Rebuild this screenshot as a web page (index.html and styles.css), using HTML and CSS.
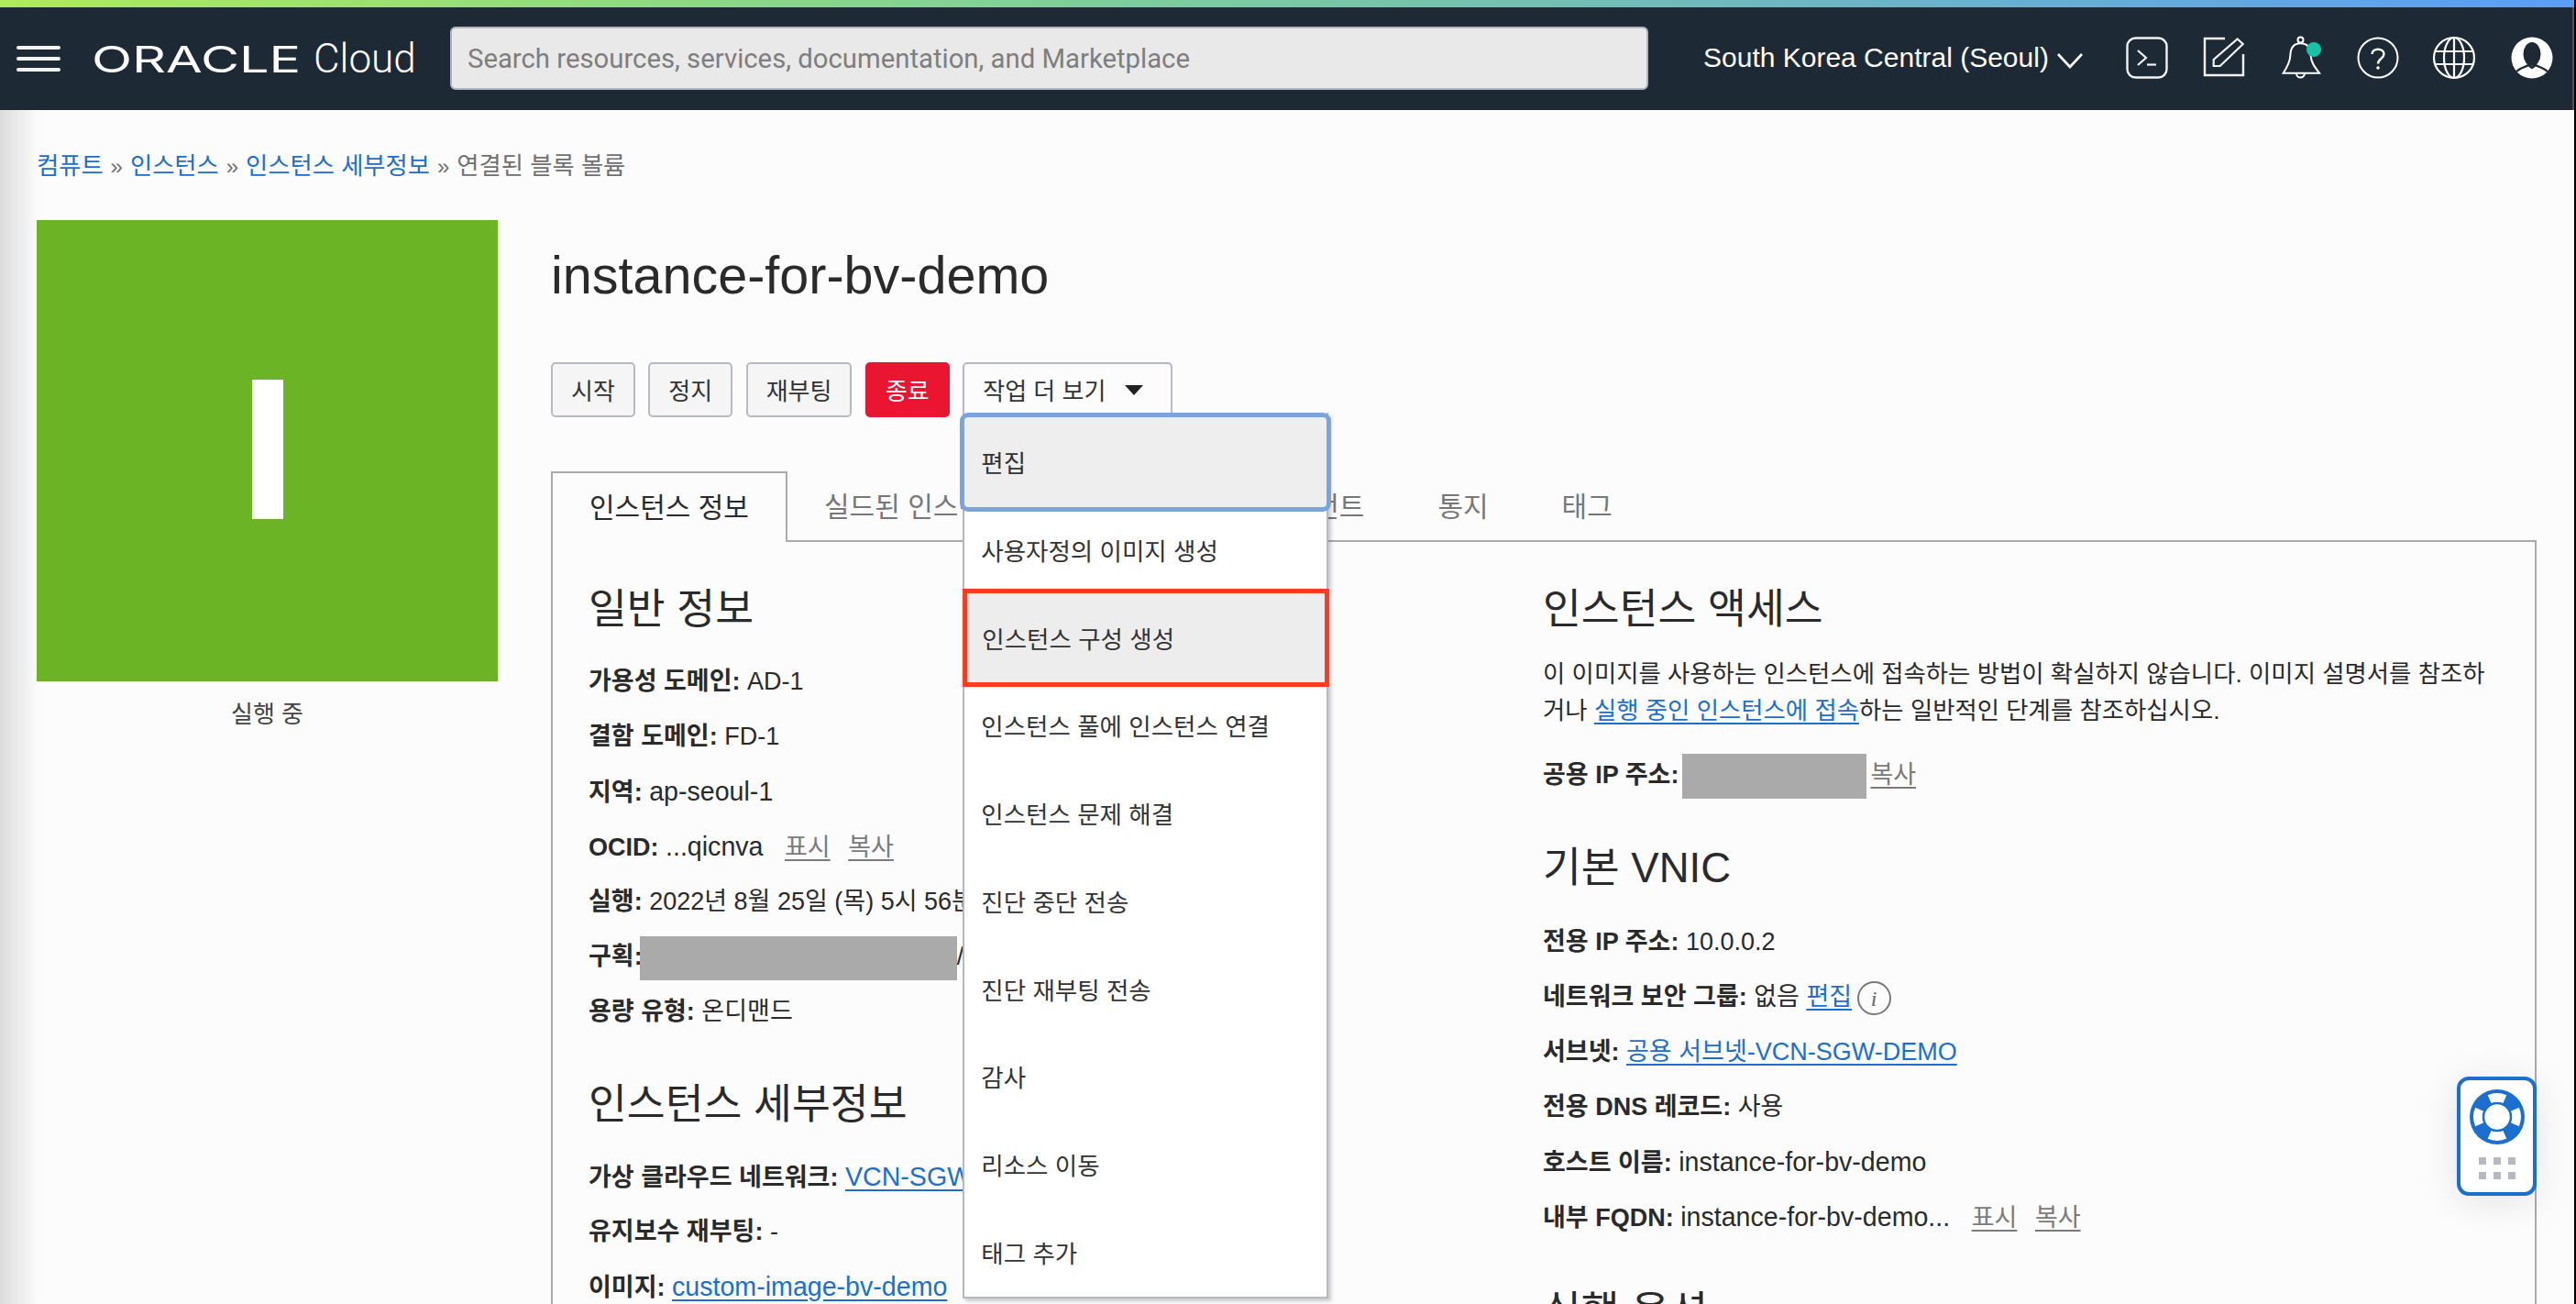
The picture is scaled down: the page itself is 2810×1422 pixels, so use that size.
FILE: index.html
```html
<!DOCTYPE html>
<html lang="ko">
<head>
  <meta charset="UTF-8" />
  <title>instance-for-bv-demo</title>
  <link rel="stylesheet" href="styles.css">
</head>
<body>
  <div class="stripe"></div>
  <header class="topnav">
    <div class="hamburger"><span></span><span></span><span></span></div>
    <div class="logo"><span class="logo-oracle">ORACLE</span><span class="logo-cloud">Cloud</span></div>
    <div class="search">Search resources, services, documentation, and Marketplace</div>
    <div class="region">South Korea Central (Seoul)
      <svg class="chev" width="28" height="17" viewBox="0 0 28 17"><path d="M1 1l13 14L27 1" fill="none" stroke="#fff" stroke-width="2.6"/></svg>
    </div>
    <div class="nav-icons">
      <svg width="46" height="47" viewBox="0 0 46 47" fill="none" stroke="#f2f2f2" stroke-width="2.4"><rect x="1.5" y="1.5" width="43" height="43" rx="9"/><path d="M13 15l9 8-9 8" stroke-width="2.2"/><path d="M23 30.5h10" stroke-width="2.2"/></svg>
      <svg width="48" height="46" viewBox="0 0 48 46" fill="none" stroke="#f2f2f2" stroke-width="2.4"><path d="M24 2H2v40h42V19"/><path d="M37.7 2.5l6 5.5-25 24h-7v-7z" stroke-width="2.2"/></svg>
      <svg width="46" height="50" viewBox="0 0 46 50" fill="none" stroke="#fff" stroke-width="2"><path d="M1.7 41.7C6 35 9 30 9.3 23 9.5 14 13 9.3 20.5 9.3S31.5 14 31.7 23C32 30 36 35 41 41.7z"/><circle cx="20.5" cy="5.6" r="3"/><path d="M16 42a4.5 4.5 0 0 0 9 0"/><circle cx="35" cy="16" r="8" fill="#14c4a4" stroke="none"/></svg>
      <svg class="nudge" width="46" height="46" viewBox="0 0 46 46" fill="none" stroke="#fff" stroke-width="2"><circle cx="23" cy="23" r="21.5"/><path d="M16.5 19C16.5 12 29.5 12 29.5 19 29.5 24 23 24 23 29.5" stroke-width="2.4"/><circle cx="23" cy="34" r="1.8" fill="#fff" stroke="none"/></svg>
      <svg class="nudge" width="48" height="48" viewBox="0 0 48 48" fill="none" stroke="#fff" stroke-width="2.2"><circle cx="24" cy="24" r="22"/><ellipse cx="24" cy="24" rx="11" ry="22"/><path d="M24 2v44M4 17h40M4 31h40"/></svg>
      <svg width="46" height="46" viewBox="0 0 46 46"><circle cx="23" cy="23" r="22.5" fill="#fff"/><ellipse cx="23" cy="19" rx="9.5" ry="13" fill="#1e2936"/><path d="M6 38c4-4 10-5 13-7l4 3 4-3c3 2 9 3 13 7" fill="none" stroke="#1e2936" stroke-width="2.2"/></svg>
    </div>
  </header>

  <main class="page">
    <nav class="crumbs">
      <a>컴퓨트</a><i>»</i><a>인스턴스</a><i>»</i><a>인스턴스 세부정보</a><i>»</i><span>연결된 블록 볼륨</span>
    </nav>
    <div class="detail">
      <aside class="side">
        <div class="badge"><span class="badge-i"></span></div>
        <div class="badge-label">실행 중</div>
      </aside>
      <section class="content">
        <h1>instance-for-bv-demo</h1>
        <div class="actions">
          <button class="btn">시작</button>
          <button class="btn">정지</button>
          <button class="btn">재부팅</button>
          <button class="btn btn-red">종료</button>
          <div class="more">
            <button class="btn btn-more">작업 더 보기<em class="caret"></em></button>
            <ul class="menu">
              <li class="focus">편집</li>
              <li>사용자정의 이미지 생성</li>
              <li class="marked">인스턴스 구성 생성</li>
              <li>인스턴스 풀에 인스턴스 연결</li>
              <li>인스턴스 문제 해결</li>
              <li>진단 중단 전송</li>
              <li>진단 재부팅 전송</li>
              <li>감사</li>
              <li>리소스 이동</li>
              <li>태그 추가</li>
            </ul>
          </div>
        </div>
        <div class="tabs">
          <div class="tab active">인스턴스 정보</div>
          <div class="tab">실드된 인스턴스</div>
          <div class="tab tab-agent">Oracle Cloud 에이전트</div>
          <div class="tab">통지</div>
          <div class="tab">태그</div>
        </div>
        <div class="panel">
          <div class="col">
            <h2>일반 정보</h2>
            <div class="row"><b>가용성 도메인:</b> AD-1</div>
            <div class="row"><b>결함 도메인:</b> FD-1</div>
            <div class="row"><b>지역:</b> <span class="id">ap-seoul-1</span></div>
            <div class="row"><b>OCID:</b> <span class="id">...qicnva</span> <a class="gray gap">표시</a> <a class="gray gap2">복사</a></div>
            <div class="row"><b>실행:</b> 2022년 8월 25일 (목) 5시 56분</div>
            <div class="row"><b>구획:</b><span class="redact redact-wide"></span>/</div>
            <div class="row"><b>용량 유형:</b> 온디맨드</div>
            <h2 class="second">인스턴스 세부정보</h2>
            <div class="row"><b>가상 클라우드 네트워크:</b> <a class="link id">VCN-SGW-DEMO</a></div>
            <div class="row"><b>유지보수 재부팅:</b> -</div>
            <div class="row"><b>이미지:</b> <a class="link id">custom-image-bv-demo</a></div>
          </div>
          <div class="col">
            <h2>인스턴스 액세스</h2>
            <p class="note">이 이미지를 사용하는 인스턴스에 접속하는 방법이 확실하지 않습니다. 이미지 설명서를 참조하<br>거나 <a class="link">실행 중인 인스턴스에 접속</a>하는 일반적인 단계를 참조하십시오.</p>
            <div class="row row-ip"><b>공용 IP 주소:</b><span class="redact redact-ip"></span><a class="gray">복사</a></div>
            <h2 class="vnic">기본 VNIC</h2>
            <div class="row"><b>전용 IP 주소:</b> 10.0.0.2</div>
            <div class="row"><b>네트워크 보안 그룹:</b> 없음 <a class="link">편집</a> <span class="info">i</span></div>
            <div class="row"><b>서브넷:</b> <a class="link">공용 서브넷-VCN-SGW-DEMO</a></div>
            <div class="row"><b>전용 DNS 레코드:</b> 사용</div>
            <div class="row"><b>호스트 이름:</b> <span class="id">instance-for-bv-demo</span></div>
            <div class="row"><b>내부 FQDN:</b> <span class="id">instance-for-bv-demo...</span> <a class="gray gap">표시</a> <a class="gray gap2">복사</a></div>
            <h2 class="options">실행 옵션</h2>
          </div>
        </div>
      </section>
    </div>
    <div class="helper">
      <svg width="60" height="60" viewBox="0 0 60 60">
        <circle cx="30" cy="30" r="30" fill="#1a6fcf"/>
        <circle cx="30" cy="30" r="21" fill="none" stroke="#fff" stroke-width="10" pathLength="100" stroke-dasharray="13 12" stroke-dashoffset="6.5"/>
        <circle cx="30" cy="30" r="15" fill="#fff" stroke="#1a6fcf" stroke-width="2.5"/>
      </svg>
      <div class="helper-dots"><span></span><span></span><span></span><span></span><span></span><span></span></div>
    </div>
  </main>
</body>
</html>
```

FILE: styles.css
```css
* {
  box-sizing: border-box;
}
html {
  height: 100%;
  background: #000;
}
body {
  margin: 0;
  width: 2808px;
  height: 1422px;
  overflow: hidden;
  font-family: "Liberation Sans", "Noto Sans CJK KR", sans-serif;
  font-size: 27px;
  color: #2a2a2a;
  background: #fcfcfc;
}
.stripe {
  height: 8px;
  background: linear-gradient(90deg, #aeea5a 0%, #86d68c 32%, #70bcb8 64%, #5a9ef8 100%);
}
.topnav {
  height: 112px;
  background: #1e2936;
  border-right: 2px solid #4a525e;
  display: flex;
  align-items: center;
  color: #fff;
}
.hamburger {
  margin-left: 18px;
  width: 48px;
  flex: none;
  display: flex;
  flex-direction: column;
  gap: 8px;
}
.hamburger span {
  height: 4px;
  border-radius: 2px;
  background: #f4f4f4;
}
.logo {
  margin-left: 34px;
  width: 373px;
  flex: none;
  display: flex;
  align-items: center;
  white-space: nowrap;
}
.logo-oracle {
  font-family: "Inter", sans-serif;
  font-weight: 400;
  font-size: 40px;
  display: inline-block;
  width: 242px;
  transform: scaleX(1.44);
  transform-origin: left center;
}
.logo-cloud {
  font-family: "Roboto", sans-serif;
  font-weight: 300;
  font-size: 44px;
}
.search {
  width: 1307px;
  flex: none;
  height: 69px;
  margin-left: 18px;
  margin-top: -2px;
  padding: 2px 0 0 17px;
  display: flex;
  align-items: center;
  background: #e9e9e9;
  border: 2px solid #b0b6bf;
  border-radius: 6px;
  color: #7e7e7e;
  font-family: "Roboto", sans-serif;
  font-size: 29.3px;
  white-space: nowrap;
}
.region {
  margin-left: 60px;
  width: 461px;
  flex: none;
  display: flex;
  align-items: center;
  gap: 9px;
  font-family: "Liberation Sans", sans-serif;
  font-size: 30px;
  margin-top: -2px;
  white-space: nowrap;
}
.chev {
  margin-top: 6px;
}
.nav-icons {
  display: flex;
  align-items: center;
  gap: 38px;
  margin-top: -2px;
}
.nav-icons .nudge {
  margin-left: -2px;
}

.page {
  position: relative;
  height: 1302px;
  padding-left: 40px;
  background: linear-gradient(90deg, #dcdcdc 0, #fcfcfc 42px);
}
.crumbs {
  height: 118px;
  padding-top: 44px;
  line-height: 34px;
  font-size: 26.3px;
  color: #707070;
}
.crumbs a {
  color: #1a6fcf;
}
.crumbs i {
  font-style: normal;
  margin: 0 8px;
  font-size: 24px;
}
.detail {
  display: flex;
}
.side {
  width: 561px;
  flex: none;
  padding-top: 2px;
}
.badge {
  width: 503px;
  height: 503px;
  background: #6ab425;
  display: flex;
  align-items: center;
  justify-content: center;
}
.badge-i {
  width: 34px;
  height: 152px;
  margin-top: -3px;
  background: #fff;
}
.badge-label {
  width: 503px;
  margin-top: 19px;
  text-align: center;
  font-size: 26px;
  line-height: 34px;
  color: #444;
}
.content {
  width: 2166px;
  flex: none;
}
h1 {
  margin: 0;
  height: 157px;
  padding-top: 30px;
  font-size: 57.5px;
  line-height: 64px;
  font-weight: 400;
  color: #2a2a2a;
}
.actions {
  display: flex;
  gap: 14.5px;
  height: 60px;
}
.btn {
  height: 60px;
  padding: 0 20px 2px;
  font: inherit;
  font-size: 26px;
  color: #333;
  background: #f5f5f6;
  border: 2px solid #b5bac2;
  border-radius: 5px;
  white-space: nowrap;
}
.btn-red {
  background: #ea1530;
  border-color: #ea1530;
  color: #fff;
}
.more {
  position: relative;
}
.btn-more {
  width: 229px;
  display: flex;
  align-items: center;
  background: #fcfcfc;
}
.caret {
  margin-left: 21px;
  margin-top: 3px;
  border: 10px solid transparent;
  border-top: 11px solid #222;
  border-bottom: 0;
}
.menu {
  position: absolute;
  z-index: 5;
  left: 0;
  top: 55px;
  width: 399px;
  height: 966px;
  margin: 0;
  padding: 0;
  list-style: none;
  background: #fff;
  border: 2px solid #b5bac2;
  border-top: 0;
  box-shadow: 3px 3px 4px rgba(0, 0, 0, 0.2);
  font-size: 26.5px;
}
.menu li {
  height: 95.8px;
  padding-left: 18px;
  display: flex;
  align-items: center;
  color: #333;
  white-space: nowrap;
}
.menu .focus {
  margin: 0 -5px;
  width: 405px;
  height: 108px;
  padding-left: 18px;
  padding-bottom: 2px;
  margin-bottom: -6px;
  position: relative;
  background: #eee;
  border: 5px solid #79a4dc;
  border-radius: 9px;
}
.menu .marked {
  margin: -6px -2px 0;
  width: 400px;
  height: 107px;
  margin-bottom: -6px;
  padding-left: 16px;
  padding-bottom: 0;
  position: relative;
  background: #ededed;
  border: 5px solid #ff3b1f;
}
.tabs {
  display: flex;
  height: 77px;
  margin-top: 59px;
  border-bottom: 2px solid #aaa;
}
.tab {
  padding: 0 40px;
  height: 75px;
  line-height: 78px;
  font-size: 30px;
  color: #777;
  white-space: nowrap;
}
.tab-agent {
  padding-left: 54px;
}
.tab.active {
  width: 258px;
  height: 77px;
  padding: 0 0 0 40px;
  margin-left: 0;
  color: #2a2a2a;
  line-height: 76px;
  background: #fcfcfc;
  border: 2px solid #aaa;
  border-bottom: 0;
}
.panel {
  display: grid;
  grid-template-columns: 1041px 1fr;
  padding-left: 39px;
  height: 900px;
  border-left: 2px solid #aaa;
  border-right: 2px solid #aaa;
}
h2 {
  margin: 0;
  height: 122px;
  padding-top: 42px;
  font-size: 45.5px;
  line-height: 64px;
  font-weight: 400;
  color: #2a2a2a;
}
h2.second {
  height: 120px;
  padding-top: 40px;
}
.row {
  height: 60px;
  line-height: 60px;
  white-space: nowrap;
}
.row b {
  font-weight: 700;
}
.id {
  font-size: 28.6px;
}
.link {
  color: #1a6fcf;
  text-decoration: underline;
  text-underline-offset: 4px;
}
.gray {
  color: #7a7a7a;
  text-decoration: underline;
  text-underline-offset: 4px;
}
.gap {
  margin-left: 16px;
}
.gap2 {
  margin-left: 12px;
}
.redact {
  display: inline-block;
  background: #aaa;
  vertical-align: middle;
}
.redact-wide {
  width: 346px;
  height: 48px;
  margin-left: -3px;
}
.redact-ip {
  width: 201px;
  height: 49px;
  margin: 0 4px 0 4px;
}
.note {
  margin: 2px 0 0;
  font-size: 26.4px;
  line-height: 40px;
  height: 100px;
}
h2.vnic {
  height: 122px;
  padding-top: 40px;
}
h2.options {
  padding-top: 42px;
}
.info {
  display: inline-flex;
  align-items: center;
  justify-content: center;
  width: 37px;
  height: 37px;
  margin-left: -2px;
  vertical-align: middle;
  border: 2px solid #7a7a7a;
  border-radius: 50%;
  font-family: "Liberation Serif", serif;
  font-style: italic;
  font-size: 24px;
  color: #666;
}
.helper {
  position: absolute;
  z-index: 6;
  left: 2680px;
  top: 1054px;
  width: 87px;
  height: 130px;
  padding-top: 10px;
  display: flex;
  flex-direction: column;
  align-items: center;
  background: #fff;
  border: 4px solid #1a6fcf;
  border-radius: 13px;
  box-shadow: 0 6px 40px rgba(0, 0, 0, 0.1);
}
.helper-dots {
  display: grid;
  grid-template-columns: repeat(3, 8px);
  gap: 8px;
  margin-top: 14px;
}
.helper-dots span {
  height: 8px;
  background: #b5bac2;
}
```
